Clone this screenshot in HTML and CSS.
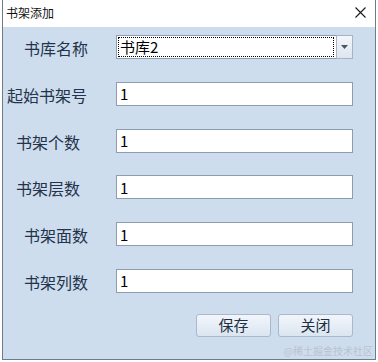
FILE: index.html
```html
<!DOCTYPE html>
<html lang="zh-CN">
<head>
    <meta charset="UTF-8">
    <meta name="viewport" content="width=device-width, initial-scale=1.0">
    <title>书架添加</title>
    <link rel="stylesheet" href="styles.css">
</head>
<body>
    <div class="window">
        <div class="titlebar">
            <span class="title">书架添加</span>
            <span class="close">
                <svg width="11" height="11" viewBox="0 0 11 11">
                    <path d="M0.5 0.5 L10.5 10.5 M10.5 0.5 L0.5 10.5" stroke="#1a1a1a" stroke-width="1.1" fill="none"/>
                </svg>
            </span>
        </div>

        <div class="content">
            <form class="form">
                <label class="label indent-a">书库名称</label>
                <div class="combo">
                    <div class="combo-text">书库2</div>
                    <div class="combo-btn">
                        <svg width="7" height="4" viewBox="0 0 7 4"><path d="M0 0 H7 L3.5 4 Z" fill="#4a5563"/></svg>
                    </div>
                </div>

                <label class="label indent-b">起始书架号</label>
                <input class="field" type="text" value="1">

                <label class="label indent-c">书架个数</label>
                <input class="field" type="text" value="1">

                <label class="label indent-c">书架层数</label>
                <input class="field" type="text" value="1">

                <label class="label indent-a">书架面数</label>
                <input class="field" type="text" value="1">

                <label class="label indent-a">书架列数</label>
                <input class="field" type="text" value="1">
            </form>

            <div class="buttons">
                <button class="btn" type="button">保存</button>
                <button class="btn" type="button">关闭</button>
            </div>

            <div class="watermark">@稀土掘金技术社区</div>
        </div>
    </div>
</body>
</html>
```

FILE: styles.css
```css
/* Page */
body {
    margin: 0;
    background: #ffffff;
    font-family: "Noto Sans CJK SC", "Noto Sans", sans-serif;
}

/* Dialog window */
.window {
    margin-left: 2px;
    width: 372px;
    height: 359px;
    border: 1px solid #6f7b89;
    border-top: none;
    background: #cedded;
    display: flex;
    flex-direction: column;
}

.titlebar {
    height: 27px;
    background: #ffffff;
    display: flex;
    align-items: center;
    justify-content: space-between;
    padding: 0 9px 0 3px;
}

.title {
    font-size: 12px;
    color: #111;
    line-height: 12px;
    margin-top: -1px;
}

.close {
    display: flex;
    margin-top: -2px;
}

/* Form area */
.content {
    position: relative;
    flex: 1;
    padding: 8px 0 0 0;
}

.form {
    display: grid;
    grid-template-columns: 113px 237px;
    grid-auto-rows: 24px;
    row-gap: 22.8px;
    margin: 0;
}

.label {
    font-size: 16px;
    line-height: 24px;
    color: #22334b;
    padding-top: 1px;
    white-space: nowrap;
}

.indent-a { padding-left: 21px; }
.indent-b { padding-left: 4px; }
.indent-c { padding-left: 13px; }

.field {
    box-sizing: border-box;
    width: 237px;
    height: 24px;
    margin: 0;
    border: 1px solid #8c9db1;
    background: #ffffff;
    padding: 0 0 0 3px;
    font-family: "Noto Sans CJK SC", "Noto Sans", sans-serif;
    font-size: 15px;
    color: #000;
    outline: none;
}

/* Combo box */
.combo {
    box-sizing: border-box;
    height: 24px;
    border: 1px solid #8c9db1;
    background: #ffffff;
    display: flex;
    padding: 1px;
}

.combo-text {
    flex: 1;
    border: 1px dotted #000;
    font-size: 15px;
    line-height: 18px;
    padding-left: 1px;
    color: #000;
}

.combo-btn {
    width: 15px;
    margin: -2px -2px -2px 2px;
    border: 1px solid #a6b3c2;
    background: linear-gradient(#f3f6fa, #dfe6ee);
    display: flex;
    align-items: center;
    justify-content: center;
}

/* Buttons */
.buttons {
    display: flex;
    gap: 7px;
    margin: 21px 0 0 193px;
}

.btn {
    width: 75px;
    height: 23px;
    border: 1px solid #a9b8ca;
    border-radius: 3px;
    background: linear-gradient(#f2f6fb, #dbe5f0);
    font-family: "Noto Sans CJK SC", "Noto Sans", sans-serif;
    font-size: 15px;
    line-height: 20px;
    color: #1f2f45;
    padding: 0;
}

.watermark {
    position: absolute;
    right: 2px;
    bottom: 1px;
    font-size: 10px;
    color: #b8c3cf;
    white-space: nowrap;
}
```
